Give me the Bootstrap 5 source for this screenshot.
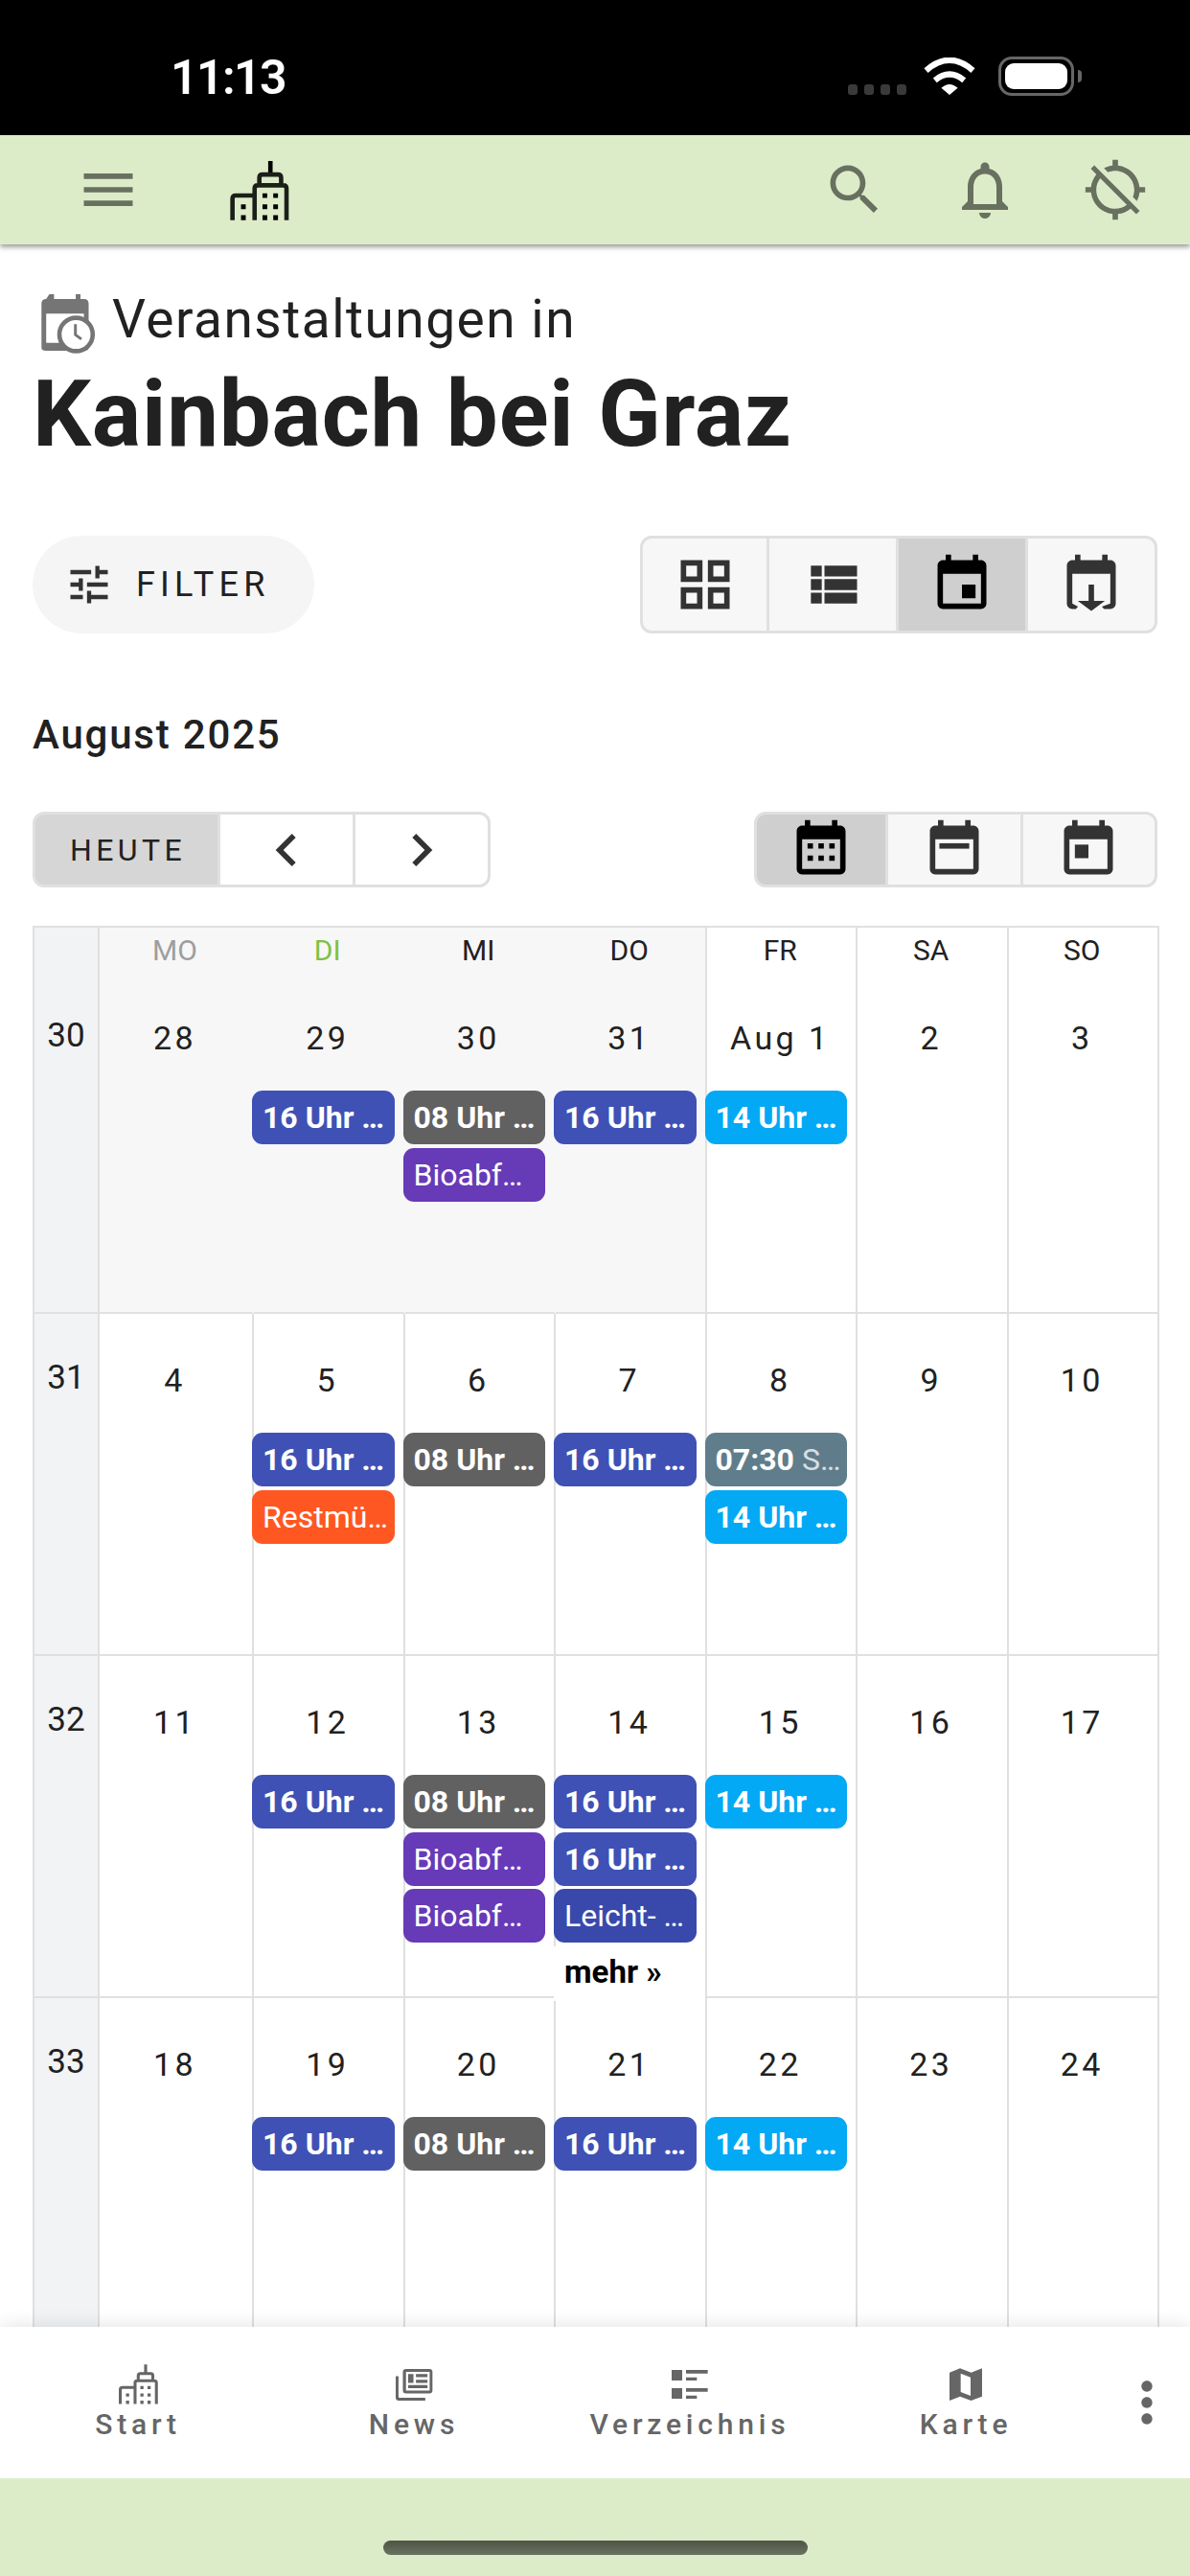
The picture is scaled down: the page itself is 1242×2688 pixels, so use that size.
<!DOCTYPE html>
<html lang="de">
<head>
  <meta charset="UTF-8" />
  <meta name="viewport" content="width=device-width, initial-scale=1.0"/>
  <title>Veranstaltungen</title>
  <link href="https://cdn.jsdelivr.net/npm/bootstrap@5.3.2/dist/css/bootstrap.min.css" rel="stylesheet"/>
  <style>
    html, body { margin: 0; height: 2688px; overflow: hidden; }
    body { font-family: Roboto, sans-serif; color: #212121; background: #fff; }
    .phone { width: 1242px; height: 2688px; }

    /* status bar */
    .statusbar { height: 141px; background: #000; color: #fff; padding: 0 113px 0 178px; }
    .clock { font-weight: 600; font-size: 50px; line-height: 1; letter-spacing: -1.6px; margin-top: 56px; }
    .signal { gap: 7px; margin: 88px 18px 0 0; }
    .signal i { width: 10px; height: 11px; border-radius: 3px; background: #3a3a3a; }
    .wifi { width: 54px; height: 39px; margin: 60px 24px 0 0; }
    .batt { width: 79px; height: 41px; margin-top: 59px; border: 3px solid #666; border-radius: 14px; padding: 4px; }
    .batt span { display: block; height: 100%; background: #fff; border-radius: 9px; }
    .batt-nub { width: 4px; height: 13px; background: #666; border-radius: 0 4px 4px 0; margin: 73px 0 0 4px; }

    /* app bar */
    .appbar { height: 114px; background: #ddecc8; box-shadow: 0 3px 5px rgba(0,0,0,.38); position: relative; z-index: 3; padding: 0 10px 0 45px; }
    .bar-btn { width: 136px; color: #687060; }
    .ic68 { width: 68px; height: 68px; fill: currentColor; }
    .bell { width: 72px; height: 72px; fill: currentColor; }
    .city-logo { width: 62px; height: 62px; color: #1c1f19; margin: 2px 0 0 59px; }

    /* main */
    .page { padding: 46px 34px 0; overflow: hidden; min-height: 0; }
    .title-row { height: 64px; }
    .ev-icon { width: 57px; height: 63px; margin: 6px 17px 0 9px; color: #757575; }
    .kicker { font-size: 55px; font-weight: 400; line-height: 64px; letter-spacing: 1.5px; }
    .town { font-size: 96px; font-weight: 700; line-height: 100px; letter-spacing: .8px; margin: 17px 0 0; color: #212121; }
    .filter-btn { --bs-btn-bg: #f5f5f5; --bs-btn-border-color: #f5f5f5; --bs-btn-hover-bg: #f5f5f5; --bs-btn-hover-border-color: #f5f5f5; width: 294px; height: 102px; border-radius: 51px; padding: 0 0 0 32px; font-size: 36px; font-weight: 400; letter-spacing: 5.2px; color: #212121; margin-top: 77px; gap: 23px; }
    .filter-btn svg { width: 52px; height: 52px; fill: #333; }
    .views { margin-top: 77px; }
    .phone .btn-group > .btn.tg.tg { margin-left: 0; }
    .tg { padding: 0; background: #f7f7f7; color: #333; --bs-btn-hover-bg: #f7f7f7; border: 0 solid #e0e0e0; border-width: 3px 3px 3px 0; border-radius: 12px; }
    .tg:first-child { border-left-width: 3px; }
    .views .tg { width: 135px; height: 102px; }
    .tg.on { background: #cfcfcf; color: #000; }
    .month { font-size: 42px; font-weight: 500; line-height: 50px; letter-spacing: 1.8px; margin: 81px 0 55px; }
    .navs .tg { height: 79px; }
    .tg.wht { background: #fff; }
    .tg.today { width: 196px; padding-left: 3px; background: #d6d6d6; font-size: 32px; font-weight: 400; letter-spacing: 4.4px; color: #212121; }
    .tg.step { width: 141px; }
    .modes .tg { width: 140.5px; height: 79px; }

    /* calendar */
    .cal { width: 1176px; margin-top: 40px; border-top: 2px solid #e0e0e0; }
    .cal-row { display: grid; grid-template-columns: 70px 161px repeat(6, 1fr); grid-template-rows: minmax(0, 1fr); height: 357px; }
    .cal-row.hd { height: 46px; }
    .wk, .cell { border-right: 2px solid #e0e0e0; border-bottom: 2px solid #e0e0e0; min-width: 0; }
    .hd > div { border-bottom: 0; }
    .wk { background: #f1f3f5; border-left: 2px solid #e0e0e0; font-size: 35px; line-height: 40px; padding-top: 47px; text-align: center; }
    .hd .wk { padding: 0; }
    .cell.past { background: #f7f7f7; }
    .cell.past.open { border-right-color: #f7f7f7; }
    .wkday { font-size: 30px; line-height: 47px; text-align: center; padding-right: 2px; }
    .wkday.mute { color: #9e9e9e; }
    .wkday.now { color: #7cc243; }
    .num { height: 124px; padding: 48px 2px 0 0; font-size: 34px; font-weight: 400; line-height: 42px; letter-spacing: 3.4px; text-align: center; }
    .evt { height: 56px; margin: 0 9px 3.5px -2px; padding: 0 11px; border-radius: 11px; color: #fff; font-size: 32px; line-height: 56px; white-space: nowrap; overflow: hidden; }
    .evt b { font-weight: 700; }
    .evt em { font-style: normal; opacity: .75; }
    .blue { background: #3f51b5; }
    .navy { background: #3949ab; }
    .grey { background: #616161; }
    .lila { background: #673ab7; }
    .sky { background: #03a9f4; }
    .rust { background: #ff5722; }
    .slate { background: #607d8b; }
    .more-link { position: relative; z-index: 2; height: 57px; margin-left: -2px; padding-left: 11px; background: #fff; color: #000; font-size: 33px; font-weight: 700; line-height: 54px; }

    /* bottom nav */
    .tabs { height: 158px; background: #fff; box-shadow: 0 0 18px rgba(0,0,0,.13); position: relative; z-index: 3; }
    .tab { width: 288px; padding-top: 39px; color: #666; }
    .tab svg { height: 42px; fill: currentColor; }
    .tab-city { width: 41px; }
    .tab-news { width: 39px; }
    .tab-list { width: 38px; }
    .tab-map { width: 34px; }
    .tab span { font-size: 30px; font-weight: 500; line-height: 36px; letter-spacing: 4.8px; margin-top: 3px; }
    .tab-more { width: 90px; color: #666; }
    .gesture { height: 102px; background: #ddecc8; position: relative; z-index: 3; padding-top: 65px; }
    .gesture i { display: block; width: 443px; height: 15px; border-radius: 8px; background: linear-gradient(#4d5445, #6a7260); }
  </style>
</head>
<body>
  <svg width="0" height="0" class="position-absolute">
    <symbol id="i-menu" viewBox="0 0 24 24"><path d="M3 18h18v-2H3v2zm0-5h18v-2H3v2zm0-7v2h18V6H3z"/></symbol>
    <symbol id="i-search" viewBox="0 0 24 24"><path d="M15.5 14h-.79l-.28-.27C15.41 12.59 16 11.11 16 9.5 16 5.91 13.09 3 9.5 3S3 5.91 3 9.5 5.91 16 9.5 16c1.61 0 3.09-.59 4.23-1.57l.27.28v.79l5 4.99L20.49 19l-4.99-5zm-6 0C7.01 14 5 11.99 5 9.5S7.01 5 9.5 5 14 7.01 14 9.5 11.99 14 9.5 14z"/></symbol>
    <symbol id="i-bell" viewBox="0 0 24 24"><path d="M12 22c1.1 0 2-.9 2-2h-4c0 1.1.9 2 2 2zm6-6v-5c0-3.07-1.63-5.64-4.5-6.32V4c0-.83-.67-1.5-1.5-1.5s-1.5.67-1.5 1.5v.68C7.64 5.36 6 7.92 6 11v5l-2 2v1h16v-1l-2-2zm-2 1H8v-6c0-2.48 1.51-4.5 4-4.5s4 2.02 4 4.5v6z"/></symbol>
    <symbol id="i-noloc" viewBox="0 0 24 24"><path d="M20.94 11c-.46-4.17-3.77-7.48-7.94-7.94V1h-2v2.06c-1.13.12-2.19.46-3.15.97l1.5 1.5C10.16 5.19 11.06 5 12 5c3.87 0 7 3.13 7 7 0 .94-.19 1.84-.52 2.65l1.5 1.5c.5-.96.84-2.02.97-3.15H23v-2h-2.06zM3 4.27l2.04 2.04C3.97 7.62 3.26 9.23 3.06 11H1v2h2.06c.46 4.17 3.77 7.48 7.94 7.94V23h2v-2.06c1.77-.2 3.38-.91 4.69-1.98L19.73 21 21 19.73 4.27 3 3 4.27zm13.27 13.27C15.09 18.45 13.61 19 12 19c-3.87 0-7-3.13-7-7 0-1.61.55-3.09 1.46-4.27l9.81 9.81z"/></symbol>
    <symbol id="i-city" viewBox="720 80 186 188">
      <path d="M840 80h14v44h-14zM822 182h15v15h-15zM856 182h15v15h-15zM822 217h15v15h-15zM856 217h15v15h-15zM822 251h15v16h-15zM856 251h15v16h-15zM754 217h15v15h-15zM754 251h15v16h-15z"/>
      <path d="M812 155v-22q0-10 10-10h49q10 0 10 10v22M797 267V167q0-10 10-10h81q10 0 10 10v100M727 267v-68q0-10 10-10h55" fill="none" stroke="currentColor" stroke-width="14"/>
    </symbol>
    <symbol id="i-tune" viewBox="0 0 24 24"><path d="M3 17v2h6v-2H3zM3 5v2h10V5H3zm10 16v-2h8v-2h-8v-2h-2v6h2zM7 9v2H3v2h4v2h2V9H7zm14 4v-2H11v2h10zm-6-4h2V7h4V5h-4V3h-2v6z"/></symbol>
    <symbol id="i-grid" viewBox="0 0 24 24"><path d="M3 3v8h8V3H3zm6 6H5V5h4v4zm-6 4v8h8v-8H3zm6 6H5v-4h4v4zm4-16v8h8V3h-8zm6 6h-4V5h4v4zm-6 4v8h8v-8h-8zm6 6h-4v-4h4v4z"/></symbol>
    <symbol id="i-rows" viewBox="0 0 24 24"><path d="M4 14h4v-4H4v4zm0 5h4v-4H4v4zM4 9h4V5H4v4zm5 5h12v-4H9v4zm0 5h12v-4H9v4zM9 5v4h12V5H9z"/></symbol>
    <symbol id="i-event" viewBox="0 0 24 24"><path d="M17 12h-5v5h5v-5zM16 1v2H8V1H6v2H5c-1.11 0-1.99.9-1.99 2L3 19c0 1.1.89 2 2 2h14c1.1 0 2-.9 2-2V5c0-1.1-.9-2-2-2h-1V1h-2zm3 18H5V8h14v11z"/></symbol>
    <symbol id="i-down" viewBox="0 0 24 24"><path d="M6 1h2v2h8V1h2v2h1c1.1 0 2 .9 2 2v14c0 1.1-.9 2-2 2h-2.3l-.8-.9L19 19V8H5v11l2.1 1.1-.8.9H5c-1.1 0-2-.9-2-2V5c0-1.1.9-2 2-2h1z"/><path d="M11 12h2v6h4l-5 3.7L7 18h4z"/></symbol>
    <symbol id="i-month" viewBox="0 0 24 24"><path d="M19 3h-1V1h-2v2H8V1H6v2H5c-1.11 0-1.99.9-1.99 2L3 19c0 1.1.89 2 2 2h14c1.1 0 2-.9 2-2V5c0-1.1-.9-2-2-2zm0 16H5V8h14v11z"/><path d="M7 9.5h2v2H7zM11 9.5h2v2h-2zM15 9.5h2v2h-2zM7 14h2v2H7zM11 14h2v2h-2zM15 14h2v2h-2z"/></symbol>
    <symbol id="i-week" viewBox="0 0 24 24"><path d="M19 3h-1V1h-2v2H8V1H6v2H5c-1.11 0-1.99.9-1.99 2L3 19c0 1.1.89 2 2 2h14c1.1 0 2-.9 2-2V5c0-1.1-.9-2-2-2zm0 16H5V8h14v11z"/><path d="M6.5 9.5h11v2h-11z"/></symbol>
    <symbol id="i-day" viewBox="0 0 24 24"><path d="M19 3h-1V1h-2v2H8V1H6v2H5c-1.11 0-1.99.9-1.99 2L3 19c0 1.1.89 2 2 2h14c1.1 0 2-.9 2-2V5c0-1.1-.9-2-2-2zm0 16H5V8h14v11z"/><path d="M7 10h5v5H7z"/></symbol>
    <symbol id="i-prev" viewBox="0 0 24 24"><path d="M15.41 7.41L14 6l-6 6 6 6 1.41-1.41L10.83 12z"/></symbol>
    <symbol id="i-next" viewBox="0 0 24 24"><path d="M10 6L8.59 7.41 13.17 12l-4.58 4.59L10 18l6-6z"/></symbol>
    <symbol id="i-news" viewBox="1060 58 120 106">
      <path d="M1093 62h75q10 0 10 10v58q0 10-10 10h-75q-10 0-10-10V72q0-10 10-10zm0 9v60h76V71zM1100 78h17v28h-17zM1125 78h37v10h-37zM1125 96h37v10h-37zM1100 113h62v10h-62zM1060 85h9v66q0 3 3 3h83v9h-85q-10 0-10-10z" fill-rule="evenodd"/>
    </symbol>
    <symbol id="i-list" viewBox="183 66 114 92"><path d="M183 67h33v33h-33zM228 67h68v11h-68zM228 90h34v10h-34zM183 124h33v33h-33zM228 124h68v11h-68zM228 147h34v10h-34z"/></symbol>
    <symbol id="i-map" viewBox="1052 60 102 104"><path d="M1052 75l33-13 35 13 34-13v88l-34 13-35-13-33 13zM1087 78v58l31 12V90z" fill-rule="evenodd"/></symbol>
    <symbol id="i-dots" viewBox="0 0 24 24"><path d="M12 8c1.1 0 2-.9 2-2s-.9-2-2-2-2 .9-2 2 .9 2 2 2zm0 2c-1.1 0-2 .9-2 2s.9 2 2 2 2-.9 2-2-.9-2-2-2zm0 6c-1.1 0-2 .9-2 2s.9 2 2 2 2-.9 2-2-.9-2-2-2z"/></symbol>
  </svg>

  <div class="phone d-flex flex-column">
    <!-- Status bar -->
    <div class="statusbar d-flex flex-shrink-0">
      <div class="clock me-auto">11:13</div>
      <div class="signal d-flex"><i></i><i></i><i></i><i></i></div>
      <svg class="wifi" viewBox="373 60 162 118" fill="none" stroke="#fff" stroke-width="19">
        <path d="M380 101Q454 36 528 101M408 132Q454 94 500 132"/>
        <path d="M428 156Q454 133 480 156L454 178Z" fill="#fff" stroke="none"/>
      </svg>
      <div class="batt"><span></span></div>
      <div class="batt-nub"></div>
    </div>

    <!-- App bar -->
    <nav class="appbar navbar flex-nowrap flex-shrink-0 justify-content-start">
      <div class="bar-btn d-flex justify-content-center"><svg class="ic68"><use href="#i-menu"/></svg></div>
      <svg class="city-logo"><use href="#i-city"/></svg>
      <div class="bar-btn d-flex justify-content-center ms-auto"><svg class="ic68"><use href="#i-search"/></svg></div>
      <div class="bar-btn d-flex justify-content-center"><svg class="bell"><use href="#i-bell"/></svg></div>
      <div class="bar-btn d-flex justify-content-center"><svg class="ic68"><use href="#i-noloc"/></svg></div>
    </nav>

    <!-- Content -->
    <main class="page flex-grow-1">
      <div class="title-row d-flex">
        <svg class="ev-icon" viewBox="68 35 172 192">
          <path fill="currentColor" fill-rule="evenodd" d="M93 35h15v15h69V35h15v15h11q15 0 15 15v140q0 10-15 10H83q-15 0-15-10V65q0-15 15-15zM83 97v93h120V97z"/>
          <circle cx="178" cy="163" r="53" fill="#fff" stroke="currentColor" stroke-width="14"/>
          <path d="M176 130v34l19 14" fill="none" stroke="currentColor" stroke-width="9"/>
        </svg>
        <div class="kicker">Veranstaltungen in</div>
      </div>
      <h1 class="town">Kainbach bei Graz</h1>

      <div class="d-flex justify-content-between align-items-start">
        <button class="btn filter-btn d-flex align-items-center" type="button"><svg><use href="#i-tune"/></svg>FILTER</button>
        <div class="btn-group views">
          <button class="btn tg d-flex align-items-center justify-content-center" type="button"><svg class="ic68"><use href="#i-grid"/></svg></button>
          <button class="btn tg d-flex align-items-center justify-content-center" type="button"><svg class="ic68"><use href="#i-rows"/></svg></button>
          <button class="btn tg on d-flex align-items-center justify-content-center" type="button"><svg class="ic68"><use href="#i-event"/></svg></button>
          <button class="btn tg d-flex align-items-center justify-content-center" type="button"><svg class="ic68"><use href="#i-down"/></svg></button>
        </div>
      </div>

      <div class="month">August 2025</div>

      <div class="d-flex justify-content-between">
        <div class="btn-group navs">
          <button class="btn tg today" type="button">HEUTE</button>
          <button class="btn tg wht step d-flex align-items-center justify-content-center" type="button"><svg class="ic68"><use href="#i-prev"/></svg></button>
          <button class="btn tg wht step d-flex align-items-center justify-content-center" type="button"><svg class="ic68"><use href="#i-next"/></svg></button>
        </div>
        <div class="btn-group modes">
          <button class="btn tg on d-flex align-items-center justify-content-center" type="button"><svg class="ic68"><use href="#i-month"/></svg></button>
          <button class="btn tg d-flex align-items-center justify-content-center" type="button"><svg class="ic68"><use href="#i-week"/></svg></button>
          <button class="btn tg d-flex align-items-center justify-content-center" type="button"><svg class="ic68"><use href="#i-day"/></svg></button>
        </div>
      </div>

      <div class="cal" id="cal"></div>
    </main>

    <!-- Bottom navigation -->
    <div class="tabs d-flex flex-shrink-0">
      <div class="tab d-flex flex-column align-items-center"><svg class="tab-city"><use href="#i-city"/></svg><span>Start</span></div>
      <div class="tab d-flex flex-column align-items-center"><svg class="tab-news"><use href="#i-news"/></svg><span>News</span></div>
      <div class="tab d-flex flex-column align-items-center"><svg class="tab-list"><use href="#i-list"/></svg><span>Verzeichnis</span></div>
      <div class="tab d-flex flex-column align-items-center"><svg class="tab-map"><use href="#i-map"/></svg><span>Karte</span></div>
      <div class="tab-more d-flex align-items-center justify-content-center"><svg class="ic68"><use href="#i-dots"/></svg></div>
    </div>
    <div class="gesture d-flex justify-content-center flex-shrink-0"><i></i></div>
  </div>

  <script src="https://cdn.jsdelivr.net/npm/bootstrap@5.3.2/dist/js/bootstrap.bundle.min.js"></script>
  <script>
    // Event chips per day label
    const evBlue = ['blue', '<b>16 Uhr …</b>'];
    const evGrey = ['grey', '<b>08 Uhr …</b>'];
    const evSky = ['sky', '<b>14 Uhr …</b>'];
    const evBio = ['lila', 'Bioabf…'];
    const events = {
      '29': [evBlue], '30b': [evGrey, evBio], '31': [evBlue], 'Aug 1': [evSky],
      '5': [evBlue, ['rust', 'Restmü…']], '6': [evGrey], '7': [evBlue],
      '8': [['slate', '<b>07:30</b> <em>S…</em>'], evSky],
      '12': [evBlue], '13': [evGrey, evBio, evBio],
      '14': [evBlue, evBlue, ['navy', 'Leicht- …']], '15': [evSky],
      '19': [evBlue], '20': [evGrey], '21': [evBlue], '22': [evSky]
    };
    const weeks = [
      [30, ['28', '29', '30', '31', 'Aug 1', '2', '3']],
      [31, ['4', '5', '6', '7', '8', '9', '10']],
      [32, ['11', '12', '13', '14', '15', '16', '17']],
      [33, ['18', '19', '20', '21', '22', '23', '24']]
    ];
    const dayNames = ['MO', 'DI', 'MI', 'DO', 'FR', 'SA', 'SO'];

    function pastClass(i) {
      if (i > 3) return '';
      return i < 3 ? ' past open' : ' past';
    }

    let html = '<div class="cal-row hd"><div class="wk"></div>';
    dayNames.forEach((name, i) => {
      const tone = i === 0 ? ' mute' : i === 1 ? ' now' : '';
      html += `<div class="cell wkday${tone}${pastClass(i)}">${name}</div>`;
    });
    html += '</div>';

    weeks.forEach(([week, days], w) => {
      html += `<div class="cal-row"><div class="wk">${week}</div>`;
      days.forEach((day, i) => {
        const list = events[w === 0 && day === '30' ? '30b' : day] || [];
        const chips = list.map(e => `<div class="evt ${e[0]}">${e[1]}</div>`).join('');
        const more = day === '14' ? '<div class="more-link">mehr »</div>' : '';
        html += `<div class="cell${w === 0 ? pastClass(i) : ''}"><div class="num">${day}</div>${chips}${more}</div>`;
      });
      html += '</div>';
    });
    document.getElementById('cal').innerHTML = html;
  </script>
</body>
</html>
